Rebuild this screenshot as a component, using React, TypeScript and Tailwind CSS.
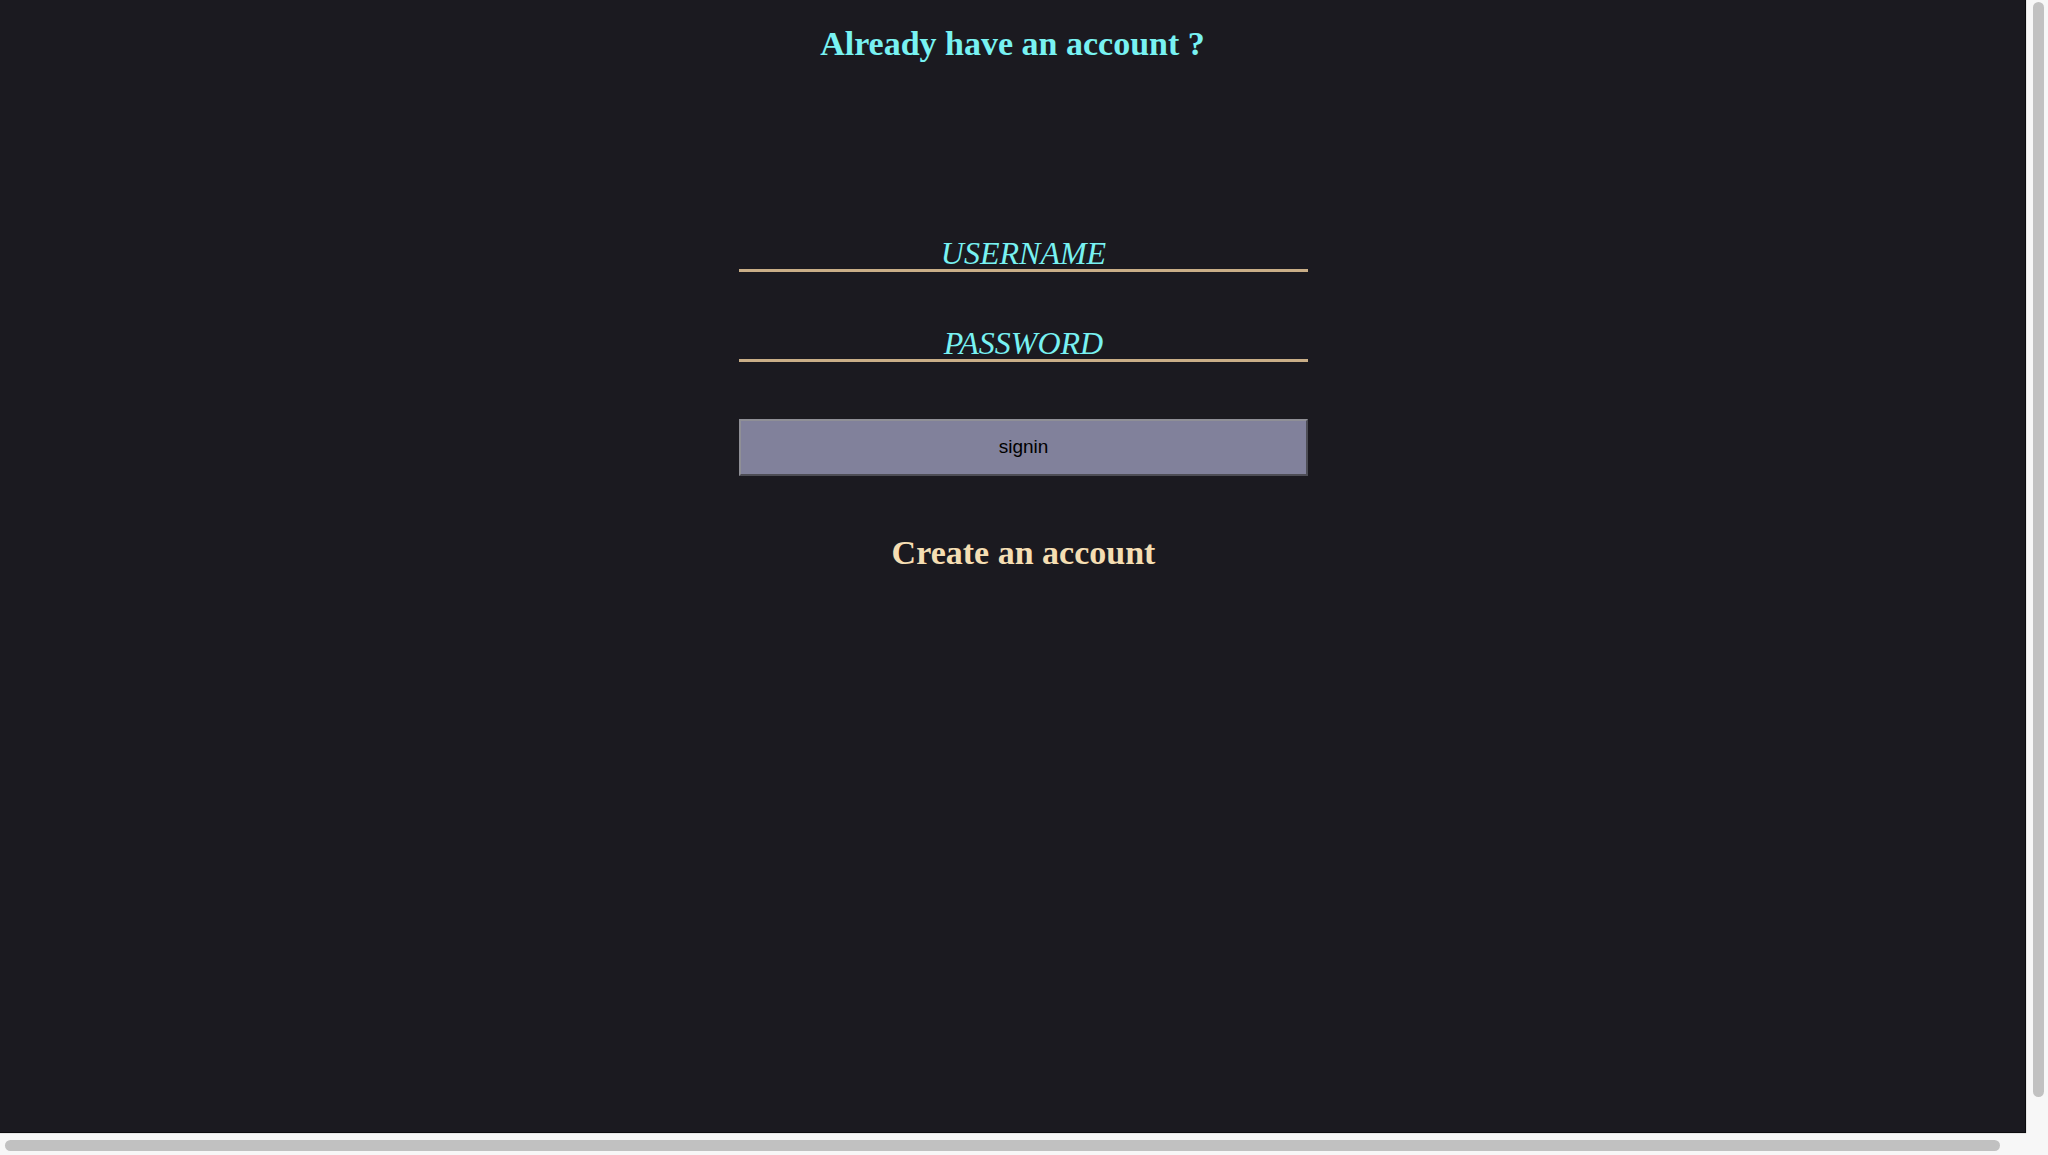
import React from 'react';

const serif = { fontFamily: '"Liberation Serif", "Times New Roman", serif' };

function Field({ placeholder, type }: { placeholder: string; type: string }) {
  return (
    <input
      type={type}
      placeholder={placeholder}
      className="block w-full h-[40px] pt-[5px] bg-transparent border-0 border-b-[3px] border-[#c9ae87] text-center text-[32px] italic text-[#78f2f2] placeholder:text-[#78f2f2] outline-none"
      style={serif}
    />
  );
}

export default function App() {
  return (
    <div className="grid grid-cols-[2026px_22px] grid-rows-[1133px_22px] w-[2048px] h-[1155px] overflow-hidden bg-[#f7f7f7]">
      <main className="bg-[#1b1a20] border-r border-b border-[#0c0c0e] overflow-hidden">
        <h1
          className="mt-[24px] text-center text-[34px] leading-[40px] font-bold text-[#78f2f2]"
          style={serif}
        >
          Already have an account ?
        </h1>

        <form className="ml-[739px] w-[569px] mt-[168px]" onSubmit={(e) => e.preventDefault()}>
          <Field placeholder="USERNAME" type="text" />
          <div className="mt-[50px]">
            <Field placeholder="PASSWORD" type="password" />
          </div>
          <button
            type="submit"
            className="block w-full h-[57px] mt-[57px] bg-[#81819b] border-2 border-t-[#8f8f96] border-l-[#8f8f96] border-b-[#4d4d55] border-r-[#4d4d55] text-[19px] text-black"
            style={{ fontFamily: '"Liberation Sans", Arial, sans-serif' }}
          >
            signin
          </button>
          <h2
            className="mt-[57px] text-center text-[34px] leading-[40px] font-bold text-[#f5deb3]"
            style={serif}
          >
            Create an account
          </h2>
        </form>
      </main>

      {/* vertical scrollbar */}
      <div className="border-l border-[#e6e6e6] pl-[6px] pr-[4px] pt-[2px]">
        <div className="w-[11px] h-[1095px] rounded-full bg-[#c1c1c1]" />
      </div>

      {/* horizontal scrollbar */}
      <div className="border-t border-[#e6e6e6] pt-[6px] pl-[5px]">
        <div className="w-[1995px] h-[11px] rounded-full bg-[#c1c1c1]" />
      </div>

      <div className="bg-[#f7f7f7]" />
    </div>
  );
}
